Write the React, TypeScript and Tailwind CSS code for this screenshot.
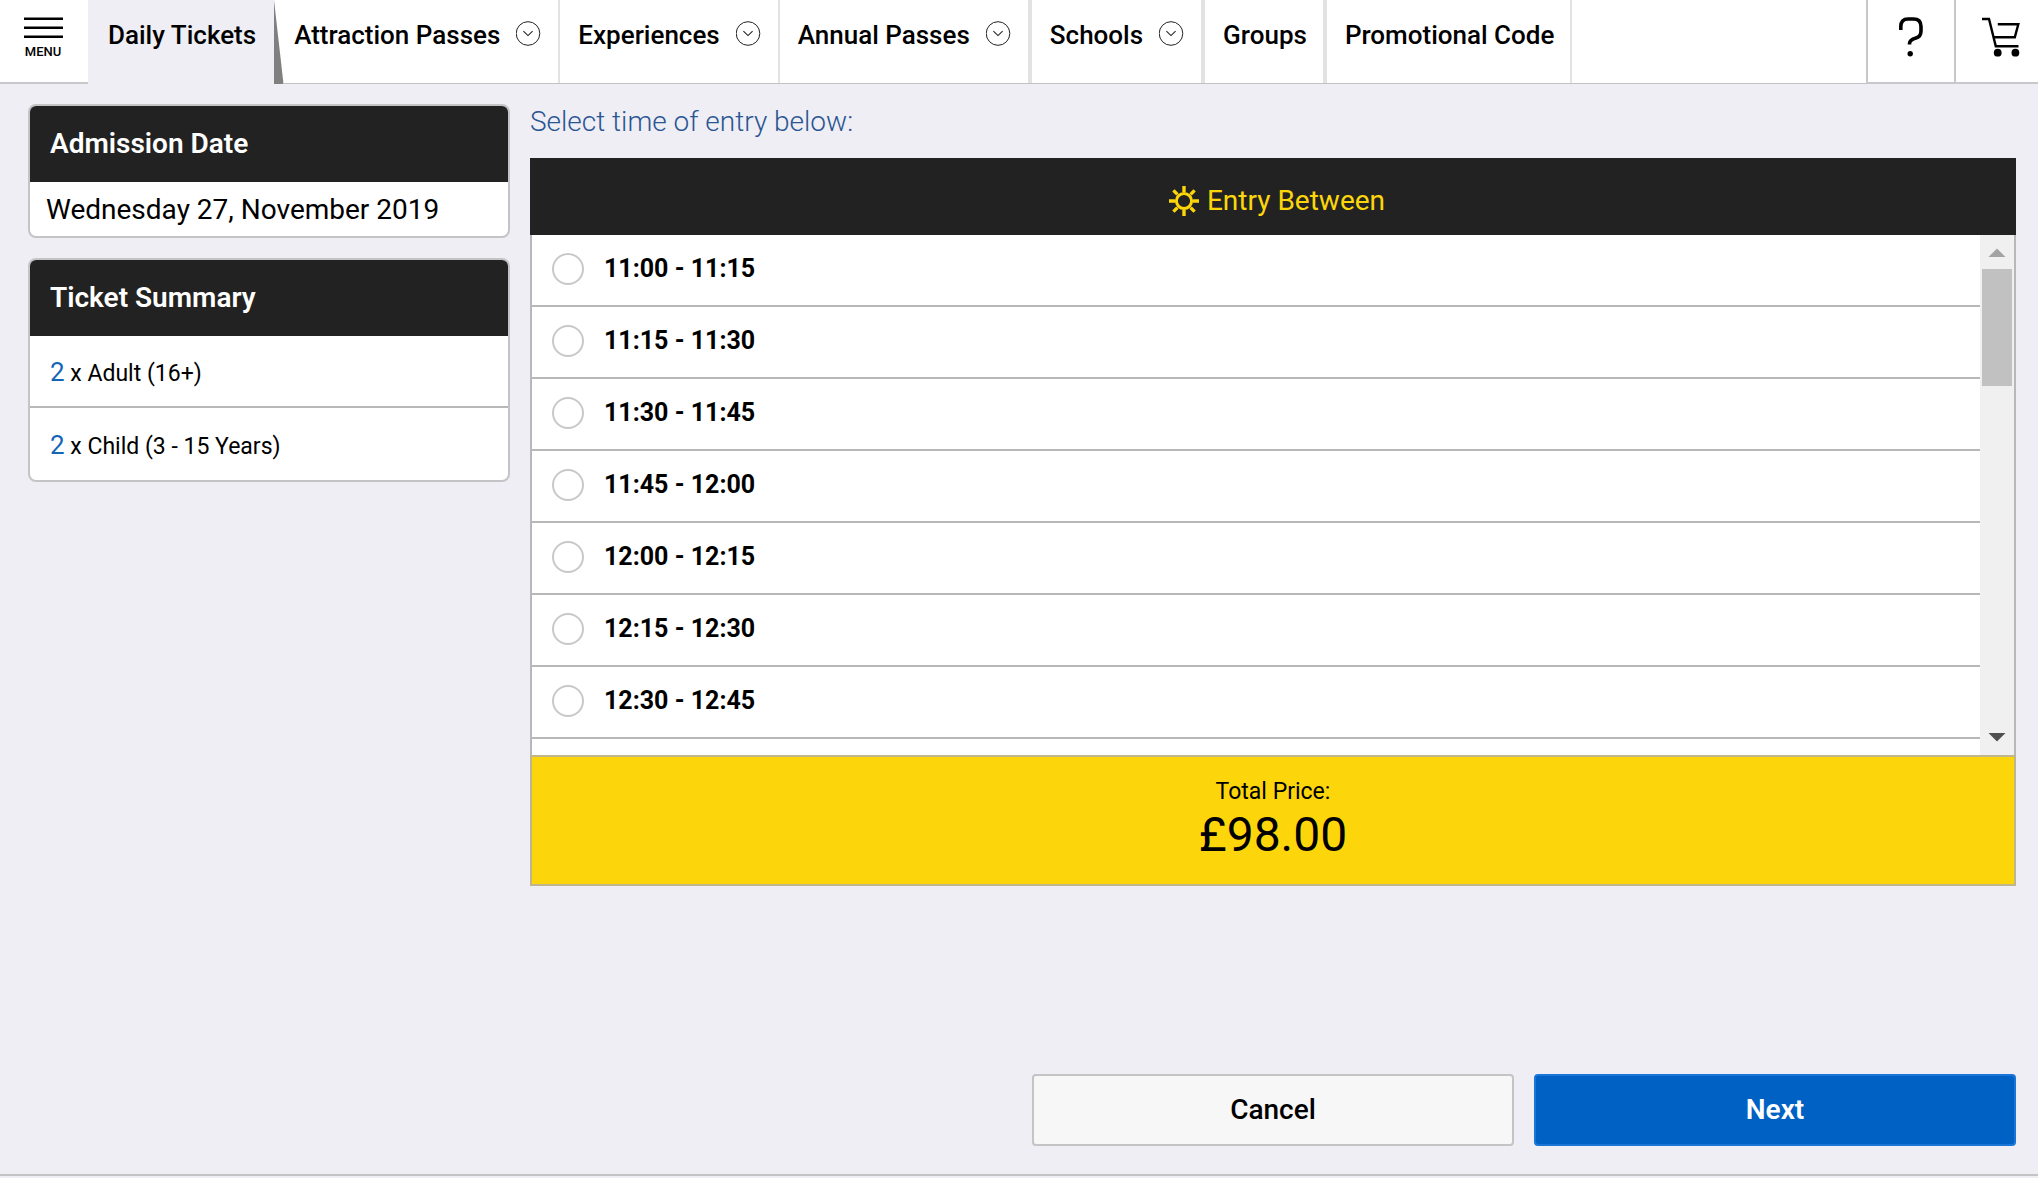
import { useState } from "react";

type NavLink = {
  label: string;
  href: string;
  hasMenu?: boolean;
  className?: string;
};

const navLinks: NavLink[] = [
  { label: "Attraction Passes", href: "#attraction-passes", hasMenu: true, className: "pl-2.5 border-r-2" },
  { label: "Experiences", href: "#experiences", hasMenu: true, className: "pl-[18px] border-r-2" },
  { label: "Annual Passes", href: "#annual-passes", hasMenu: true, className: "pl-[18px] border-r-4" },
  { label: "Schools", href: "#schools", hasMenu: true, className: "pl-[18px] border-r-4" },
  { label: "Groups", href: "#groups", className: "pl-[18px] border-r-4" },
  { label: "Promotional Code", href: "#promotional-code", className: "pl-[18px] border-r-2" },
];

const tickets = [
  { quantity: 2, name: "Adult (16+)" },
  { quantity: 2, name: "Child (3 - 15 Years)" },
];

const timeSlots = [
  "11:00 - 11:15",
  "11:15 - 11:30",
  "11:30 - 11:45",
  "11:45 - 12:00",
  "12:00 - 12:15",
  "12:15 - 12:30",
  "12:30 - 12:45",
];

const ChevronCircle = () => (
  <svg className="h-[26px] w-[26px]" viewBox="0 0 26 26" fill="none" stroke="#222" aria-hidden="true">
    <circle cx="12" cy="13.5" r="11.8" strokeWidth="1" />
    <path d="M7.4 11.2 12 15.6 16.6 11.2" strokeWidth="1.1" />
  </svg>
);

const SunIcon = () => (
  <svg className="h-[30px] w-[30px]" viewBox="0 0 30 30" fill="none" stroke="currentColor" strokeWidth="3.4" aria-hidden="true">
    <circle cx="15" cy="15" r="7.6" strokeWidth="3" />
    <path d="M15 0v6M15 24v6M0 15h6M24 15h6M4.4 4.4l4 4M21.6 21.6l4 4M4.4 25.6l4-4M21.6 8.4l4-4" />
  </svg>
);

const QuestionIcon = () => (
  <svg className="h-10 w-6" viewBox="0 0 24 40" fill="none" stroke="#000" strokeWidth="3.6" aria-hidden="true">
    <path d="M1.8 13V9.5Q1.8 2 9 2h5.5Q22 2 22 9.5v4.5q0 5.5-5 7-6.5 2-6.5 5.5v1" />
    <circle cx="11.2" cy="36.7" r="2.7" fill="#000" stroke="none" />
  </svg>
);

const CartIcon = () => (
  <svg className="h-10 w-[38px]" viewBox="0 0 38 40" fill="none" stroke="#000" strokeWidth="2.4" aria-hidden="true">
    <path d="M0 2h7l6.8 27.3H36.5" />
    <path d="M15.8 7.2H36.3L32.8 20.3H11.8" />
    <circle cx="15.7" cy="35.7" r="3.9" fill="#000" stroke="none" />
    <circle cx="33.4" cy="35.7" r="3.9" fill="#000" stroke="none" />
  </svg>
);

function Header() {
  return (
    <header className="flex h-[84px] bg-white">
      <button
        type="button"
        className="flex w-[88px] flex-col items-center border-b-2 border-[#c8c8cc] pt-[17px] pr-0.5"
      >
        <svg className="h-[22px] w-[39px]" viewBox="0 0 39 22" stroke="#000" strokeWidth="2.4" aria-hidden="true">
          <path d="M0 1.7h39M0 10.7h39M0 19.7h39" />
        </svg>
        <span className="mt-1 text-[13px] leading-[18px] font-medium">MENU</span>
      </button>

      <nav className="flex flex-1 text-[26px] leading-[30px] font-medium">
        <a href="#daily-tickets" aria-current="page" className="bg-[#eeeef4] pt-5 pr-[18px] pl-5">
          Daily Tickets
        </a>
        {/* slanted shadow beside the active tab */}
        <svg className="h-[84px] w-2.5" viewBox="0 0 10 84" preserveAspectRatio="none" aria-hidden="true">
          <path d="M0 0 9.5 84H0Z" fill="#808080" />
        </svg>
        {navLinks.map((link) => (
          <div key={link.href} className="flex border-b border-b-[#c2c2c6]">
            <a
              href={link.href}
              className={`flex items-start gap-4 border-r-[#e2e2e2] pt-5 pr-4 ${link.className}`}
            >
              {link.label}
              {link.hasMenu && <ChevronCircle />}
            </a>
          </div>
        ))}
        <div className="flex-1 border-b border-[#c2c2c6]" />
      </nav>

      <button
        type="button"
        aria-label="Help"
        className="flex w-[88px] justify-center border-b-2 border-l-2 border-[#c8c8cc] pt-[17px]"
      >
        <QuestionIcon />
      </button>
      <button
        type="button"
        aria-label="Basket"
        className="flex w-[84px] justify-end border-b-2 border-l-2 border-[#c8c8cc] pt-[17px] pr-[18px]"
      >
        <CartIcon />
      </button>
    </header>
  );
}

function Card({ title, children }: { title: string; children: React.ReactNode }) {
  return (
    <section className="overflow-hidden rounded-lg border-2 border-[#c4c4c6] bg-white">
      <h2 className="flex h-[76px] items-center bg-[#222] px-5 text-[28px] font-semibold text-white">
        {title}
      </h2>
      {children}
    </section>
  );
}

function Sidebar() {
  return (
    <aside className="flex flex-col gap-5">
      <Card title="Admission Date">
        <p className="flex h-[54px] items-center px-4 pt-0.5 text-[28px]">Wednesday 27, November 2019</p>
      </Card>
      <Card title="Ticket Summary">
        <ul className="divide-y-2 divide-[#b8b8b8]">
          {tickets.map((ticket) => (
            <li key={ticket.name} className="flex h-[72px] items-center px-5 pt-0.5 text-[23px]">
              <p>
                <span className="text-[26px] text-[#1565b5]">{ticket.quantity}</span> x {ticket.name}
              </p>
            </li>
          ))}
        </ul>
      </Card>
    </aside>
  );
}

function ScrollBar() {
  return (
    <div className="flex w-[34px] flex-col items-center bg-[#f0f0f0]" aria-hidden="true">
      <svg className="h-[34px] w-[34px]" viewBox="0 0 34 34">
        <path d="M8.5 22 17 13.5 25.5 22Z" fill="#a3a3a3" />
      </svg>
      <div className="h-[117px] w-[30px] bg-[#c1c1c1]" />
      <svg className="mt-auto h-[34px] w-[34px]" viewBox="0 0 34 34">
        <path d="M8.5 12 17 20.5 25.5 12Z" fill="#505050" />
      </svg>
    </div>
  );
}

function TimePicker() {
  const [selected, setSelected] = useState("");

  return (
    <section className="col-span-3">
      <h1 className="mb-[18px] text-[28px] leading-9 font-light text-[#2a5593]">
        Select time of entry below:
      </h1>
      <div className="flex h-[77px] items-center justify-center gap-2 bg-[#222] pt-2 pl-2 text-[28px] text-[#fcd60a]">
        <SunIcon />
        <h2>Entry Between</h2>
      </div>
      <div className="flex h-[520px] border-x-2 border-[#b8b8b8] bg-white">
        <ul className="flex-1">
          {timeSlots.map((slot) => (
            <li key={slot} className="border-b-2 border-[#b8b8b8]">
              <label className="flex h-[70px] items-center gap-5 pb-0.5 pl-5 text-[25px] font-bold">
                <input
                  type="radio"
                  name="entry-time"
                  value={slot}
                  checked={selected === slot}
                  onChange={() => setSelected(slot)}
                  className="size-8 appearance-none rounded-full border-2 border-[#c8c8c8] bg-white checked:border-[10px] checked:border-[#0061c5]"
                />
                {slot}
              </label>
            </li>
          ))}
        </ul>
        <ScrollBar />
      </div>
      <div className="border-2 border-[#bfb68e] bg-[#fcd60a] pt-5 pb-[21px] text-center">
        <p className="text-[23px] leading-[30px]">Total Price:</p>
        <p className="text-5xl leading-14">£98.00</p>
      </div>
    </section>
  );
}

export default function App() {
  return (
    <div className="flex min-h-screen flex-col bg-[#eeeef4] font-[Roboto,sans-serif] text-black">
      <Header />
      <main className="flex flex-1 flex-col pt-5 pr-[22px] pb-7 pl-7">
        <div className="grid grid-cols-4 gap-5">
          <Sidebar />
          <TimePicker />
        </div>
        <div className="mt-auto grid grid-cols-4 gap-5 text-[28px] font-medium">
          <button type="button" className="col-start-3 h-[72px] rounded border-2 border-[#c4c4c4] bg-[#f7f7f7]">
            Cancel
          </button>
          <button type="button" className="h-[72px] rounded border-2 border-[#1976d8] bg-[#0061c5] font-semibold text-white">
            Next
          </button>
        </div>
      </main>
      <footer className="h-1 border-t-2 border-[#c4c4c6]" />
    </div>
  );
}
